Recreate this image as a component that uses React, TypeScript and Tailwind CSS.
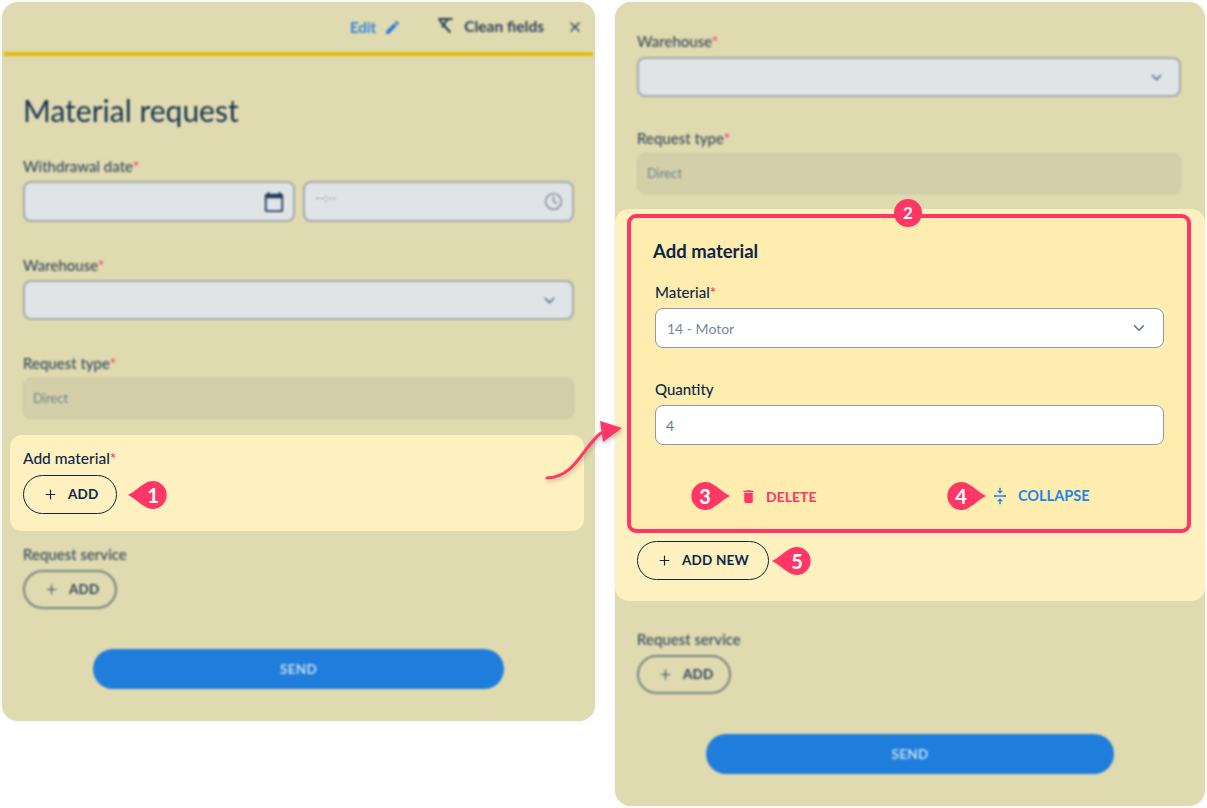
import { ChevronDown, Clock, Plus, X } from "lucide-react";
import type { ReactNode } from "react";

const font = "font-['Lato','Open_Sans',sans-serif]";

function Req() {
  return <span className="text-[#ff3666]">*</span>;
}

function Label({ children, required, className = "" }: { children: ReactNode; required?: boolean; className?: string }) {
  return (
    <div className={`text-[15px] leading-[20px] font-medium text-[#33475b] ${className}`}>
      {children}
      {required && <Req />}
    </div>
  );
}

function Badge({ n, dir = "left" }: { n: number; dir?: "left" | "right" }) {
  return (
    <div className="relative flex h-[28px] w-[40px] shrink-0 items-center justify-center">
      <svg viewBox="0 0 40 28" className={`absolute inset-0 h-full w-full ${dir === "right" ? "-scale-x-100" : ""}`}>
        <path d="M0 14C6 11 11 6 16 3A14 14 0 1 1 16 25C11 22 6 17 0 14Z" fill="#ff3666" />
      </svg>
      <span className={`relative text-[20px] leading-none font-bold text-white ${dir === "right" ? "-ml-[10px]" : "ml-[10px]"}`}>{n}</span>
    </div>
  );
}

function AddButton({ label = "ADD", muted, wide }: { label?: string; muted?: boolean; wide?: boolean }) {
  return (
    <div
      className={`flex h-[39px] items-center rounded-full pl-[19px] ${wide ? "w-[132px]" : "w-[94px]"} ${
        muted ? "border-2 border-[#77827f]" : "border-[1.5px] border-[#0c2648]"
      }`}
    >
      <Plus size={15} strokeWidth={1.8} className={muted ? "text-[#3c4f60]" : "text-[#0c2648]"} />
      <span className={`ml-[10px] text-[13.5px] font-bold tracking-[0.2px] ${muted ? "text-[#2c4059]" : "text-[#0c2648]"}`}>{label}</span>
    </div>
  );
}

function SelectBox({ className = "" }: { className?: string }) {
  return (
    <div className={`flex h-[40px] items-center justify-end rounded-[8px] border-2 border-[#a3abaa] bg-[#e0e4e7] pr-[14px] ${className}`}>
      <ChevronDown size={17} className="text-[#5d7084]" />
    </div>
  );
}

function DisabledBox({ className = "" }: { className?: string }) {
  return (
    <div className={`flex h-[41px] items-center rounded-[8px] border border-[#c9c5a0] bg-[#d3cfa9] px-[9px] text-[13px] text-[#6f8085] ${className}`}>
      Direct
    </div>
  );
}

function SendButton({ className = "" }: { className?: string }) {
  return (
    <div className={`flex h-[40px] items-center justify-center rounded-full bg-[#1f7ddb] text-[13.5px] font-bold tracking-[0.3px] text-[#c5dcf3] ${className}`}>
      SEND
    </div>
  );
}

function LeftPanel() {
  return (
    <div className="h-[719px] w-[593px] shrink-0 rounded-[16px] bg-[#e0dab0] shadow-[0_0_4px_rgba(0,0,0,0.07)]">
      <div className="blur-[0.8px]">
        <div className="flex h-[50px] items-center justify-end pr-[12px]">
          <span className="text-[15px] font-bold text-[#2f86dc]">Edit</span>
          <svg viewBox="0 0 24 24" className="ml-[8px] h-[17px] w-[17px] fill-[#1f7ddb]">
            <path d="M3 17.25V21h3.75L17.81 9.94l-3.75-3.75L3 17.25zM20.71 7.04c.39-.39.39-1.02 0-1.41l-2.34-2.34a.9959.9959 0 0 0-1.41 0l-1.83 1.83 3.75 3.75 1.83-1.83z" />
          </svg>
          <svg viewBox="0 0 24 24" className="mb-[5px] ml-[35px] h-[18px] w-[18px] fill-none stroke-[#213c59] stroke-[2.6]">
            <path d="M3 4h19M5 6l14 16M15 5L8 15" />
          </svg>
          <span className="ml-[10px] text-[15.5px] font-bold text-[#2c4059]">Clean fields</span>
          <X size={16} strokeWidth={2} className="ml-[23px] text-[#2c4059]" />
        </div>
        <div className="mx-[2px] h-[4px] bg-[#e3b90c]" />
        <div className="px-[21px]">
          <h1 className="mt-[32px] h-[44px] text-[30px] leading-[44px] font-normal text-[#14324f]">Material request</h1>
          <Label required className="mt-[24px]">Withdrawal date</Label>
          <div className="mt-[5px] grid grid-cols-2 gap-[8px]">
            <div className="flex h-[41px] items-center justify-end rounded-[8px] border-2 border-[#a3abaa] bg-[#e0e4e7] pr-[8px]">
              <svg viewBox="0 0 24 24" className="h-[22px] w-[22px] fill-[#213c59]">
                <path d="M20 3h-1V1h-2v2H7V1H5v2H4c-1.1 0-2 .9-2 2v16c0 1.1.9 2 2 2h16c1.1 0 2-.9 2-2V5c0-1.1-.9-2-2-2zm0 18H4V8h16v13z" />
              </svg>
            </div>
            <div className="flex h-[41px] items-center justify-between rounded-[8px] border-2 border-[#a3abaa] bg-[#e0e4e7] pr-[9px] pl-[11px]">
              <span className="mb-[8px] text-[12px] text-[#7c8a95]">--:--</span>
              <Clock size={19} strokeWidth={1.7} className="text-[#72838f]" />
            </div>
          </div>
          <Label required className="mt-[33px]">Warehouse</Label>
          <SelectBox className="mt-[5px]" />
          <Label required className="mt-[33px]">Request type</Label>
          <DisabledBox className="mt-[5px]" />
        </div>
      </div>
      <div className="mt-[16px] mr-[11px] ml-[8px] flex h-[96px] flex-col rounded-[12px] bg-[#fef1bf] px-[13px] pt-[13px]">
        <div className="text-[15.5px] leading-[20px] font-medium text-[#0c2648]">
          Add material
          <Req />
        </div>
        <div className="mt-[7px] flex items-center gap-[11px]">
          <AddButton />
          <Badge n={1} />
        </div>
      </div>
      <div className="blur-[0.8px] px-[21px]">
        <Label className="mt-[13px]">Request service</Label>
        <div className="mt-[6px]">
          <AddButton muted />
        </div>
        <SendButton className="mx-[70px] mt-[40px]" />
      </div>
    </div>
  );
}

function RightPanel() {
  return (
    <div className="ml-[20px] h-[804px] w-[590px] shrink-0 rounded-[16px] bg-[#e0dab0] shadow-[0_0_4px_rgba(0,0,0,0.07)]">
      <div className="blur-[0.8px] px-[22px] pt-[29px]">
        <Label required>Warehouse</Label>
        <SelectBox className="mt-[6px] w-[544px]" />
        <Label required className="mt-[31px]">Request type</Label>
        <DisabledBox className="mt-[5px] w-[544px]" />
      </div>
      <div className="mt-[15px] h-[392px] rounded-[14px] bg-[#fef1bf] px-[12px] pt-[5px]">
        <div className="relative h-[319px] w-[564px] rounded-[9px] border-[4px] border-[#ff3666] bg-[#ffecaf] pt-[21px] pl-[22px]">
          <div className="absolute -top-[19px] left-[263px] flex h-[28px] w-[28px] items-center justify-center rounded-full bg-[#ff3666] text-[17px] font-bold text-white">2</div>
          <div className="text-[18.5px] leading-[24px] font-bold text-[#0c2648]">Add material</div>
          <div className="mt-[19px] pl-[2px] text-[15px] leading-[20px] font-medium text-[#0c2648]">
            Material
            <Req />
          </div>
          <div className="mt-[6px] ml-[2px] flex h-[40px] w-[509px] items-center justify-between rounded-[8px] border border-[#8f9aa8] bg-white pr-[15px] pl-[11px] text-[14px] text-[#7b8794]">
            14 - Motor
            <ChevronDown size={18} className="text-[#5d7084]" />
          </div>
          <div className="mt-[31px] pl-[2px] text-[15px] leading-[20px] font-medium text-[#0c2648]">Quantity</div>
          <div className="mt-[6px] ml-[2px] flex h-[40px] w-[509px] items-center rounded-[8px] border border-[#8f9aa8] bg-white pl-[10px] text-[14px] text-[#64748b]">4</div>
          <div className="mt-[37px] ml-[37px] flex items-center">
            <Badge n={3} dir="right" />
            <svg viewBox="0 0 24 24" className="ml-[10px] h-[17px] w-[17px] fill-[#ff3666]">
              <path d="M6 19c0 1.1.9 2 2 2h8c1.1 0 2-.9 2-2V7H6v12zM19 4h-3.5l-1-1h-5l-1 1H5v2h14V4z" />
            </svg>
            <span className="ml-[9px] w-[180px] text-[14px] font-bold text-[#ff3666]">DELETE</span>
            <Badge n={4} dir="right" />
            <svg viewBox="0 0 24 24" className="ml-[5px] h-[18px] w-[18px] fill-[#1f86ee]">
              <path d="M8 19h3v4h2v-4h3l-4-4-4 4zm8-14h-3V1h-2v4H8l4 4 4-4zM4 11v2h16v-2H4z" />
            </svg>
            <span className="ml-[9px] text-[14.5px] font-bold text-[#1f86ee]">COLLAPSE</span>
          </div>
        </div>
        <div className="mt-[8px] ml-[10px] flex items-center gap-[3px]">
          <AddButton label="ADD NEW" wide />
          <Badge n={5} />
        </div>
      </div>
      <div className="blur-[0.8px] px-[22px]">
        <Label className="mt-[28px]">Request service</Label>
        <div className="mt-[6px]">
          <AddButton muted />
        </div>
        <SendButton className="mx-[69px] mt-[40px]" />
      </div>
    </div>
  );
}

export default function App() {
  return (
    <div className={`relative flex min-h-[808px] w-[1207px] items-start bg-white pt-[2px] pl-[2px] ${font}`}>
      <LeftPanel />
      <RightPanel />
      {/* arrow from the left form to the expanded card */}
      <svg viewBox="0 0 1207 808" className="pointer-events-none absolute inset-0 h-[808px] w-[1207px] drop-shadow-[1px_2px_2px_rgba(0,0,0,0.25)]">
        <path d="M547 478C575 477 582 448 601 433" fill="none" stroke="#ff3666" strokeWidth="3" strokeLinecap="round" />
        <path d="M600 421L622 428L603 442Z" fill="#ff3666" />
      </svg>
    </div>
  );
}
